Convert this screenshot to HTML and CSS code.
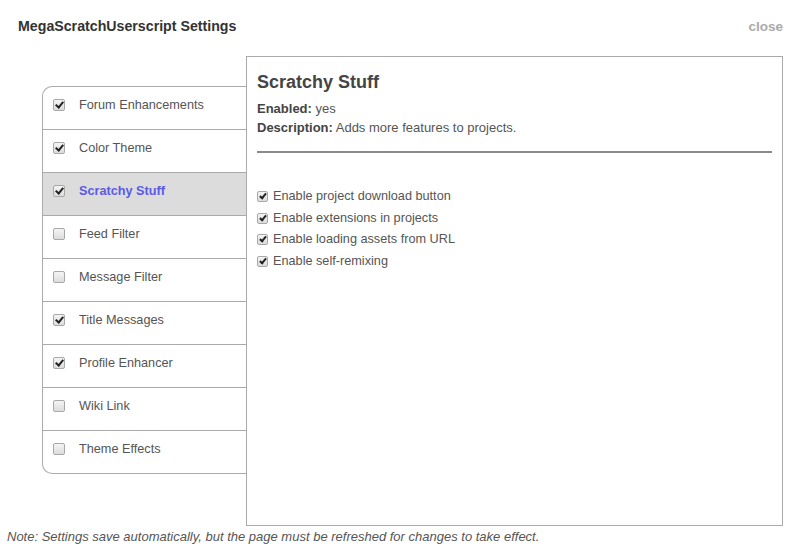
FILE: index.html
```html
<!DOCTYPE html>
<html>
<head>
<meta charset="utf-8">
<link rel="stylesheet" href="styles.css">
</head>
<body>
<div class="header">
  <div class="title">MegaScratchUserscript Settings</div>
  <div class="close">close</div>
</div>
<div class="main">
  <ul class="list">
    <li class="item"><span class="cb on"></span><span class="label">Forum Enhancements</span></li>
    <li class="item"><span class="cb on"></span><span class="label">Color Theme</span></li>
    <li class="item selected"><span class="cb on"></span><span class="label">Scratchy Stuff</span></li>
    <li class="item"><span class="cb"></span><span class="label">Feed Filter</span></li>
    <li class="item"><span class="cb"></span><span class="label">Message Filter</span></li>
    <li class="item"><span class="cb on"></span><span class="label">Title Messages</span></li>
    <li class="item"><span class="cb on"></span><span class="label">Profile Enhancer</span></li>
    <li class="item"><span class="cb"></span><span class="label">Wiki Link</span></li>
    <li class="item"><span class="cb"></span><span class="label">Theme Effects</span></li>
  </ul>
  <div class="panel">
    <h2 class="heading">Scratchy Stuff</h2>
    <div class="meta"><b>Enabled:</b> yes</div>
    <div class="meta"><b>Description:</b> Adds more features to projects.</div>
    <div class="rule"></div>
    <div class="options">
      <div class="opt"><span class="cb small on"></span>Enable project download button</div>
      <div class="opt"><span class="cb small on"></span>Enable extensions in projects</div>
      <div class="opt"><span class="cb small on"></span>Enable loading assets from URL</div>
      <div class="opt"><span class="cb small on"></span>Enable self-remixing</div>
    </div>
  </div>
</div>
<div class="note">Note: Settings save automatically, but the page must be refreshed for changes to take effect.</div>
</body>
</html>
```
FILE: styles.css
```css
html, body {
  margin: 0;
  padding: 0;
  background: #fff;
  font-family: "Liberation Sans", Arial, sans-serif;
  color: #555;
}
.header {
  display: flex;
  justify-content: space-between;
  align-items: center;
  height: 20px;
  padding: 16px 17px 0 18px;
}
.title {
  font-weight: bold;
  font-size: 14.2px;
  color: #333;
}
.close {
  font-weight: bold;
  font-size: 13.5px;
  color: #aaa;
}
.main {
  display: flex;
  align-items: flex-start;
  margin: 20px 0 0 42px;
}
.list {
  list-style: none;
  margin: 30px 0 0 0;
  padding: 0;
  width: 203px;
  border: 1px solid #aaa;
  border-right: none;
  border-radius: 10px 0 0 10px;
  overflow: hidden;
}
.item {
  display: flex;
  align-items: center;
  height: 36px;
  padding: 0 0 6px 10px;
  border-top: 1px solid #aaa;
  font-size: 12.7px;
  color: #555;
}
.item:first-child {
  border-top: none;
}
.item.selected {
  background: #dcdcdc;
}
.item.selected .label {
  color: #5a5ae6;
  font-weight: bold;
}
.cb {
  position: relative;
  box-sizing: border-box;
  width: 12px;
  height: 12px;
  border: 1px solid #a8a8a8;
  border-radius: 2px;
  background: linear-gradient(#f4f4f4, #dcdcdc);
  margin-right: 14px;
  flex: none;
}
.cb.on::after {
  content: "";
  position: absolute;
  left: 3px;
  top: 0px;
  width: 3px;
  height: 6px;
  border: solid #222;
  border-width: 0 2px 2px 0;
  transform: rotate(40deg);
}
.cb.small {
  width: 11px;
  height: 11px;
  margin-right: 5px;
  display: inline-block;
  vertical-align: -1px;
}
.cb.small.on::after {
  left: 3px;
  top: 0px;
  width: 2px;
  height: 5px;
}
.panel {
  box-sizing: border-box;
  width: 537px;
  height: 470px;
  border: 1px solid #aaa;
  padding: 15px 10px 0 10px;
  background: #fff;
  position: relative;
  z-index: 1;
}
.heading {
  margin: 0 0 7px 0;
  font-size: 18px;
  line-height: 20px;
  color: #444;
}
.meta {
  font-size: 13px;
  line-height: 19px;
  color: #555;
}
.meta b {
  color: #444;
}
.rule {
  height: 2px;
  background: #8a8a8a;
  margin-top: 14px;
}
.options {
  margin-top: 33px;
}
.opt {
  display: flex;
  align-items: center;
  font-size: 12.7px;
  line-height: 21.5px;
  color: #555;
}
.note {
  margin: 3px 0 0 7px;
  font-size: 13px;
  font-style: italic;
  color: #555;
}
```
